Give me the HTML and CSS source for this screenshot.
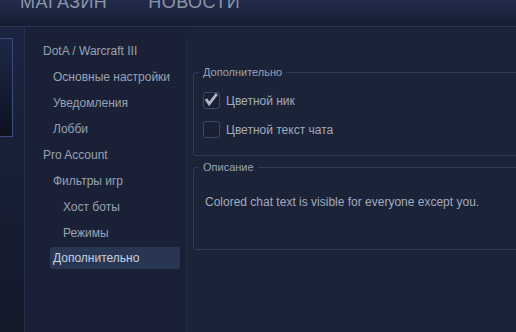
FILE: index.html
```html
<!DOCTYPE html>
<html lang="ru">
<head>
<meta charset="utf-8">
<link rel="stylesheet" href="styles.css">
</head>
<body>
<div class="app">
  <header class="topbar">
    <nav class="topnav">
      <span class="topnav-item">МАГАЗИН</span>
      <span class="topnav-item">НОВОСТИ</span>
    </nav>
  </header>
  <div class="main">
    <aside class="rail">
      <div class="rail-card"></div>
    </aside>
    <ul class="tree">
      <li class="tree-item lvl1">DotA / Warcraft III</li>
      <li class="tree-item lvl2">Основные настройки</li>
      <li class="tree-item lvl2">Уведомления</li>
      <li class="tree-item lvl2">Лобби</li>
      <li class="tree-item lvl1">Pro Account</li>
      <li class="tree-item lvl2">Фильтры игр</li>
      <li class="tree-item lvl3">Хост боты</li>
      <li class="tree-item lvl3">Режимы</li>
      <li class="tree-item selected">Дополнительно</li>
    </ul>
    <section class="content">
      <fieldset class="group group-options">
        <legend class="group-title">Дополнительно</legend>
        <label class="check-row">
          <span class="checkbox checked">
            <svg viewBox="0 0 17 17" width="17" height="17"><path d="M3 7 L6.2 11.8 L13.8 1.8" fill="none" stroke="#aeb5c3" stroke-width="2.8" stroke-linecap="butt" stroke-linejoin="miter"/></svg>
          </span>
          <span class="check-label">Цветной ник</span>
        </label>
        <label class="check-row">
          <span class="checkbox"></span>
          <span class="check-label">Цветной текст чата</span>
        </label>
      </fieldset>
      <fieldset class="group group-desc">
        <legend class="group-title">Описание</legend>
        <p class="desc">Colored chat text is visible for everyone except you.</p>
      </fieldset>
    </section>
  </div>
</div>
</body>
</html>
```
FILE: styles.css
```css
* { box-sizing: border-box; }
html, body {
  margin: 0;
  padding: 0;
  width: 516px;
  height: 332px;
  overflow: hidden;
  background: #1a2237;
  font-family: "Liberation Sans", Arial, sans-serif;
}
.app {
  width: 516px;
  height: 332px;
  display: flex;
  flex-direction: column;
}
.topbar {
  height: 27px;
  flex: none;
  background: linear-gradient(#222c4b, #161d31);
  border-bottom: 1px solid #29344f;
  overflow: hidden;
}
.topnav {
  display: flex;
  gap: 41px;
  padding-left: 20px;
  margin-top: -8px;
}
.topnav-item {
  font-size: 18px;
  line-height: 20px;
  letter-spacing: 0.45px;
  color: #8c94a8;
}
.main {
  flex: 1;
  display: flex;
  min-height: 0;
}
.rail {
  width: 25px;
  flex: none;
  border-right: 1px solid #263050;
  background: linear-gradient(#1b2440, #131929);
  padding-top: 11px;
}
.rail-card {
  width: 13px;
  height: 99px;
  border: 1px solid #3a4b7c;
  border-left: none;
  background: linear-gradient(#1d2747, #0d1220);
}
.tree {
  list-style: none;
  margin: 0;
  padding: 11px 0 0 0;
  width: 161px;
  flex: none;
  background: #1a2136;
}
.tree-item {
  height: 26px;
  line-height: 26px;
  font-size: 12px;
  color: #98a1b4;
  white-space: nowrap;
}
.lvl1 { padding-left: 18px; }
.lvl2 { padding-left: 28px; }
.lvl3 { padding-left: 38px; }
.tree-item.selected {
  margin: 1px 6px 3px 25px;
  height: 22px;
  line-height: 22px;
  padding-left: 3px;
  background: #283654;
  border-radius: 3px;
  color: #c9d0de;
}
.content {
  flex: 1;
  margin-top: 10px;
  border-left: 1px solid #222b45;
  padding: 29px 0 0 6px;
  background: #1b2339;
}
.group {
  margin: 0 -12px 0 0;
  border: 1px solid #2e3a5a;
  border-radius: 3px;
  padding: 13px 0 17px 9px;
  min-width: 0;
}
.group-title {
  margin-left: -4px;
  padding: 0 4px;
  font-size: 11px;
  line-height: 13px;
  color: #9aa3b6;
}
.group-desc {
  margin-top: 5px;
  padding: 21px 0 40px 9px;
}
.check-row {
  display: flex;
  align-items: center;
  gap: 6px;
  height: 17px;
}
.check-row + .check-row { margin-top: 12px; }
.checkbox {
  width: 17px;
  height: 17px;
  flex: none;
  border: 1px solid #3c4868;
  border-radius: 3px;
  background: #192034;
  position: relative;
}
.checkbox svg {
  position: absolute;
  left: -1px;
  top: -1px;
}
.check-label {
  font-size: 12px;
  color: #a3abbc;
  white-space: nowrap;
}
.desc {
  margin: 0 0 0 2px;
  font-size: 12px;
  line-height: 14px;
  color: #a3abbc;
  white-space: nowrap;
}
```
